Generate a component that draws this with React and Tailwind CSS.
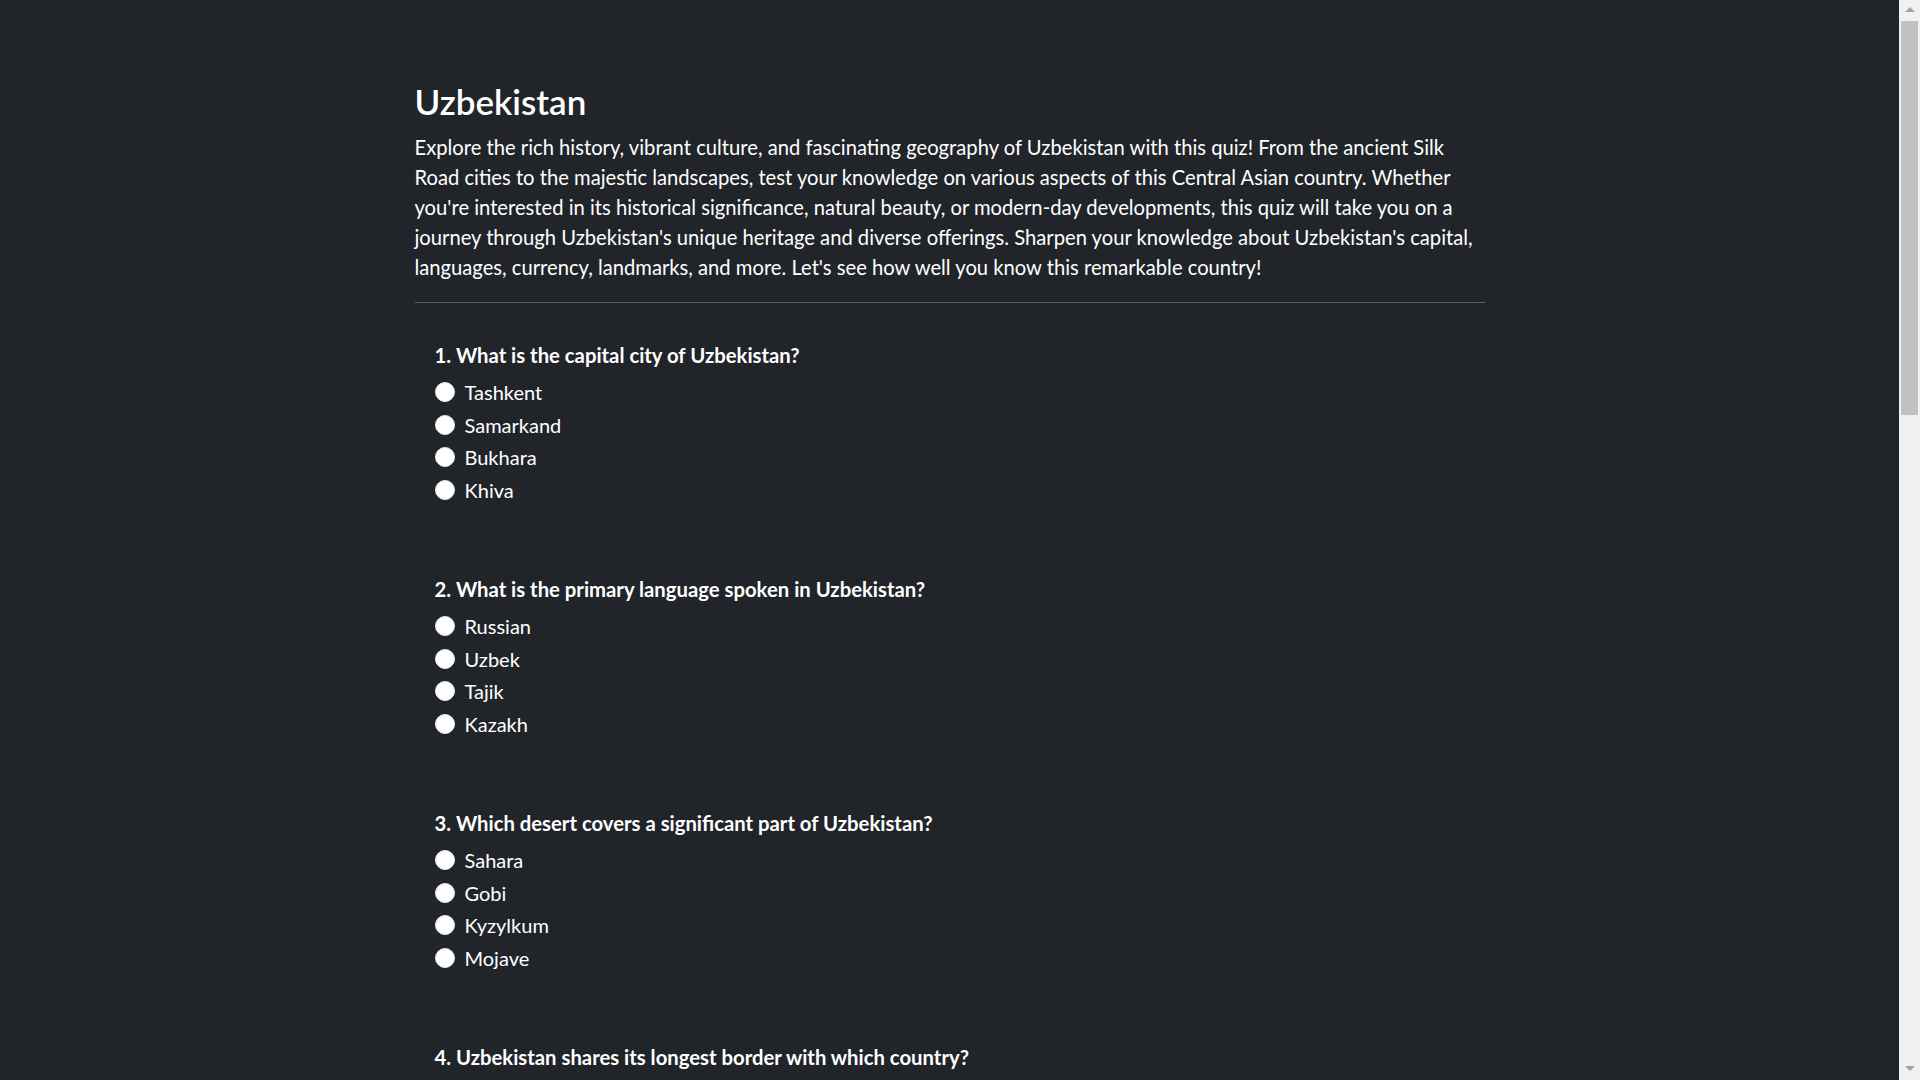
import React from "react";

const questions = [
  { q: "1. What is the capital city of Uzbekistan?", o: ["Tashkent", "Samarkand", "Bukhara", "Khiva"] },
  { q: "2. What is the primary language spoken in Uzbekistan?", o: ["Russian", "Uzbek", "Tajik", "Kazakh"] },
  { q: "3. Which desert covers a significant part of Uzbekistan?", o: ["Sahara", "Gobi", "Kyzylkum", "Mojave"] },
  { q: "4. Uzbekistan shares its longest border with which country?", o: ["Kazakhstan", "Turkmenistan", "Afghanistan", "Kyrgyzstan"] },
];

function Question({ q, o }) {
  return (
    <div className="pl-[20px] flex flex-col">
      <div className="h-[24px] leading-[24px] text-[20.3px] font-bold text-white whitespace-nowrap">{q}</div>
      <div className="mt-[10px] flex flex-col gap-[2.67px]">
        {o.map((x) => (
          <label key={x} className="h-[30px] flex items-center">
            <span className="w-[20px] h-[20px] rounded-full bg-white border border-[#e9ecef] shrink-0" />
            <span className="ml-[10px] text-[20px] leading-[30px] text-white whitespace-nowrap">{x}</span>
          </label>
        ))}
      </div>
    </div>
  );
}

function Scrollbar() {
  return (
    <div className="w-[21px] h-screen shrink-0 bg-[#f1f1f1] flex flex-col items-center">
      <div className="h-[21px] w-full flex items-center justify-center">
        <svg width="10" height="6" viewBox="0 0 10 6" className="mt-[-2px]">
          <path d="M5 0 L10 5 L0 5 Z" fill="#a3a3a3" />
        </svg>
      </div>
      <div className="w-[17px] h-[394px] bg-[#c1c1c1]" />
      <div className="flex-1" />
      <div className="h-[21px] w-full flex items-center justify-center">
        <svg width="10" height="6" viewBox="0 0 10 6" className="mt-[-2px]">
          <path d="M0 0 L10 0 L5 5 Z" fill="#a3a3a3" />
        </svg>
      </div>
    </div>
  );
}

export default function App() {
  return (
    <div className="flex h-screen w-full overflow-hidden bg-[#212529]" style={{ fontFamily: "Lato, 'Noto Sans', sans-serif" }}>
      <main className="flex-1 h-screen overflow-hidden">
        <div className="w-[1070px] mx-auto pt-[80px]">
          <h1 className="text-[35px] leading-[42px] font-semibold text-white">Uzbekistan</h1>
          <p className="mt-[10px] text-[20.2px] leading-[30px] text-white whitespace-nowrap">
            Explore the rich history, vibrant culture, and fascinating geography of Uzbekistan with this quiz! From the ancient Silk
            <br />
            Road cities to the majestic landscapes, test your knowledge on various aspects of this Central Asian country. Whether
            <br />
            you're interested in its historical significance, natural beauty, or modern-day developments, this quiz will take you on a
            <br />
            journey through Uzbekistan's unique heritage and diverse offerings. Sharpen your knowledge about Uzbekistan's capital,
            <br />
            languages, currency, landmarks, and more. Let's see how well you know this remarkable country!
          </p>
          <hr className="mt-[20px] border-0 border-t border-[#5a5d61]" />
          <div className="mt-[40px] flex flex-col gap-[72px]">
            {questions.map((x) => (
              <Question key={x.q} q={x.q} o={x.o} />
            ))}
          </div>
        </div>
      </main>
      <Scrollbar />
    </div>
  );
}
